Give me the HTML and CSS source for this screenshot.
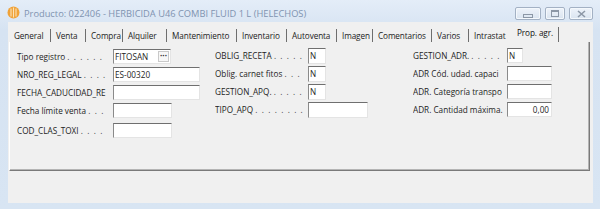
FILE: index.html
```html
<!DOCTYPE html>
<html lang="es">
<head>
<meta charset="utf-8">
<title>Producto</title>
<link rel="stylesheet" href="styles.css">
</head>
<body>
<div class="window">
  <div class="titlebar">
    <svg class="app-icon" width="13" height="13" viewBox="0 0 13 13" aria-hidden="true">
      <circle cx="6.5" cy="6.5" r="6" fill="#f0a238"/>
      <path d="M4 2.5 V10.5 M6.5 1.5 V11.5 M9 2.5 V10.5" stroke="#fbe2b8" stroke-width="1.1"/>
    </svg>
    <span class="title">Producto: 022406 - HERBICIDA U46 COMBI FLUID 1 L (HELECHOS)</span>
    <div class="caption-buttons">
      <span class="cbtn cbtn-min"><span class="glyph-min"></span></span>
      <span class="cbtn cbtn-max"><span class="glyph-max"></span></span>
      <span class="cbtn cbtn-close">
        <svg width="9" height="8" viewBox="0 0 9 8" aria-hidden="true">
          <path d="M1 1 L8 7 M8 1 L1 7" stroke="#8c97a6" stroke-width="1.6"/>
        </svg>
      </span>
    </div>
  </div>
  <div class="client">
    <div class="tabs">
      <span class="tab">General</span>
      <span class="tab">Venta</span>
      <span class="tab">Compra</span>
      <span class="tab">Alquiler</span>
      <span class="tab">Mantenimiento</span>
      <span class="tab">Inventario</span>
      <span class="tab">Autoventa</span>
      <span class="tab">Imagen</span>
      <span class="tab">Comentarios</span>
      <span class="tab">Varios</span>
      <span class="tab tab-hidden-edge">Intrastat</span>
      <span class="tab tab-active">Prop. agr.</span>
    </div>
    <div class="panel">
      <div class="form">
        <div class="col col1">
          <span class="lbl">Tipo registro <span class="lead">. . . . . .</span></span>
          <span class="field w-fito"><span class="val">FITOSAN</span><span class="dots-btn">···</span></span>
          <span class="lbl">NRO_REG_LEGAL <span class="lead">. . . .</span></span>
          <span class="field w-m"><span class="val">ES-00320</span></span>
          <span class="lbl">FECHA_CADUCIDAD_RE</span>
          <span class="field w-m"></span>
          <span class="lbl">Fecha límite venta <span class="lead">. . .</span></span>
          <span class="field w-s"></span>
          <span class="lbl row-last">COD_CLAS_TOXI <span class="lead">. . . .</span></span>
          <span class="field w-s row-last"></span>
        </div>
        <div class="col col2">
          <span class="lbl">OBLIG_RECETA <span class="lead">. . . . .</span></span>
          <span class="field w-n"><span class="val">N</span></span>
          <span class="lbl">Oblig. carnet fitos <span class="lead">. . .</span></span>
          <span class="field w-n"><span class="val">N</span></span>
          <span class="lbl">GESTION_APQ. <span class="lead">. . . . .</span></span>
          <span class="field w-n"><span class="val">N</span></span>
          <span class="lbl">TIPO_APQ <span class="lead">. . . . . . . .</span></span>
          <span class="field w-t"></span>
        </div>
        <div class="col col3">
          <span class="lbl">GESTION_ADR. <span class="lead">. . . . .</span></span>
          <span class="field w-n3"><span class="val">N</span></span>
          <span class="lbl">ADR Cód. udad. capaci</span>
          <span class="field w-a"></span>
          <span class="lbl">ADR. Categoría transpo</span>
          <span class="field w-a"></span>
          <span class="lbl">ADR. Cantidad máxima.</span>
          <span class="field w-a num"><span class="val">0,00</span></span>
        </div>
      </div>
    </div>
  </div>
</div>
</body>
</html>
```
FILE: styles.css
```css
html, body {
  margin: 0;
  padding: 0;
}
body {
  width: 600px;
  height: 209px;
  overflow: hidden;
  background: #d9e5f3;
  font-family: "Open Sans", "Noto Sans", sans-serif;
  font-size: 8.2px;
  color: #1e1e1e;
}
.window {
  width: 600px;
  height: 209px;
  display: flex;
  flex-direction: column;
  background: linear-gradient(#e4edf8, #d6e3f2 30px, #d8e5f3);
  box-sizing: border-box;
}
.titlebar {
  height: 22px;
  display: flex;
  align-items: center;
  padding: 0 8px 0 7px;
}
.app-icon {
  flex: none;
  margin-top: 3px;
}
.title {
  margin-left: 4px;
  margin-top: 4px;
  color: #8093b0;
  font-size: 9.3px;
  white-space: nowrap;
}
.caption-buttons {
  margin-left: auto;
  display: flex;
  gap: 4px;
  margin-top: 5px;
  margin-right: -1px;
}
.cbtn {
  height: 11px;
  border: 1px solid #a3b1c4;
  border-radius: 2px;
  background: linear-gradient(#eef3fa, #dae4f0);
  display: flex;
  align-items: center;
  justify-content: center;
  box-shadow: inset 0 0 0 1px #f4f8fc;
}
.cbtn-min { width: 24px; }
.cbtn-max { width: 18px; }
.cbtn-close { width: 22px; }
.glyph-min {
  width: 8px;
  height: 2px;
  border: 1px solid #8c97a6;
  margin-top: 4px;
}
.glyph-max {
  width: 6px;
  height: 4px;
  border: 1px solid #8c97a6;
  border-top-width: 2px;
}
.client {
  flex: 1;
  margin: 0 7px 6px 8px;
  background: #f0f0f0;
  display: flex;
  flex-direction: column;
  padding: 0 3px 32px 1px;
}
.tabs {
  height: 20px;
  display: grid;
  grid-template-columns: 42px 35px 37px 44px 70px 50px 50px 36px 59px 37px 43px 47px;
  align-items: end;
  letter-spacing: -0.1px;
}
.tab {
  height: 13px;
  line-height: 13px;
  padding-left: 5px;
  box-sizing: border-box;
  border-right: 1px solid #6e6e6e;
  white-space: nowrap;
  overflow: hidden;
  color: #222;
}
.tab-hidden-edge {
  border-right-color: transparent;
}
.tab-active {
  height: 15px;
  line-height: 11px;
  padding-left: 5px;
  color: #111;
}
.panel {
  flex: 1;
  border-right: 1px solid #7a7a7a;
  border-bottom: 1px solid #7a7a7a;
  border-left: 1px solid #ffffff;
  box-shadow: inset -1px -1px 0 #b4b4b4;
  padding: 7px 0 0 7px;
}
.form {
  display: grid;
  grid-template-columns: 198px 198px auto;
}
.col {
  display: grid;
  grid-auto-rows: 15px;
  row-gap: 3px;
  align-items: center;
  justify-items: start;
}
.col1 { grid-template-columns: 96px auto; }
.col2 { grid-template-columns: 93px auto; }
.col3 { grid-template-columns: 94px auto; }
.col2, .col3 { margin-top: -1px; }
.lbl {
  white-space: nowrap;
  overflow: hidden;
  width: 100%;
  line-height: 15px;
}
.lead {
  letter-spacing: 1.1px;
  color: #444;
}
.row-last {
  margin-top: 4px;
}
.field {
  height: 15px;
  box-sizing: border-box;
  background: #ffffff;
  border-top: 1px solid #6f6f6f;
  border-left: 1px solid #8a8a8a;
  border-right: 1px solid #e4e4e4;
  border-bottom: 1px solid #e4e4e4;
  display: flex;
  align-items: center;
  overflow: hidden;
}
.val {
  padding-left: 1px;
  line-height: 13px;
  white-space: nowrap;
}
.num {
  justify-content: flex-end;
}
.num .val {
  padding-right: 2px;
}
.w-fito { width: 58px; }
.w-m { width: 87px; }
.w-s { width: 59px; }
.w-n { width: 18px; height: 16px; }
.w-n3 { width: 16px; }
.w-t { width: 60px; height: 16px; }
.w-a { width: 45px; }
.dots-btn {
  margin-left: auto;
  width: 11px;
  height: 11px;
  box-sizing: border-box;
  border: 1px solid #c9c9c9;
  background: #f7f7f7;
  font-size: 8px;
  line-height: 7px;
  text-align: center;
  font-weight: bold;
  color: #333;
  margin-right: 1px;
}
```
